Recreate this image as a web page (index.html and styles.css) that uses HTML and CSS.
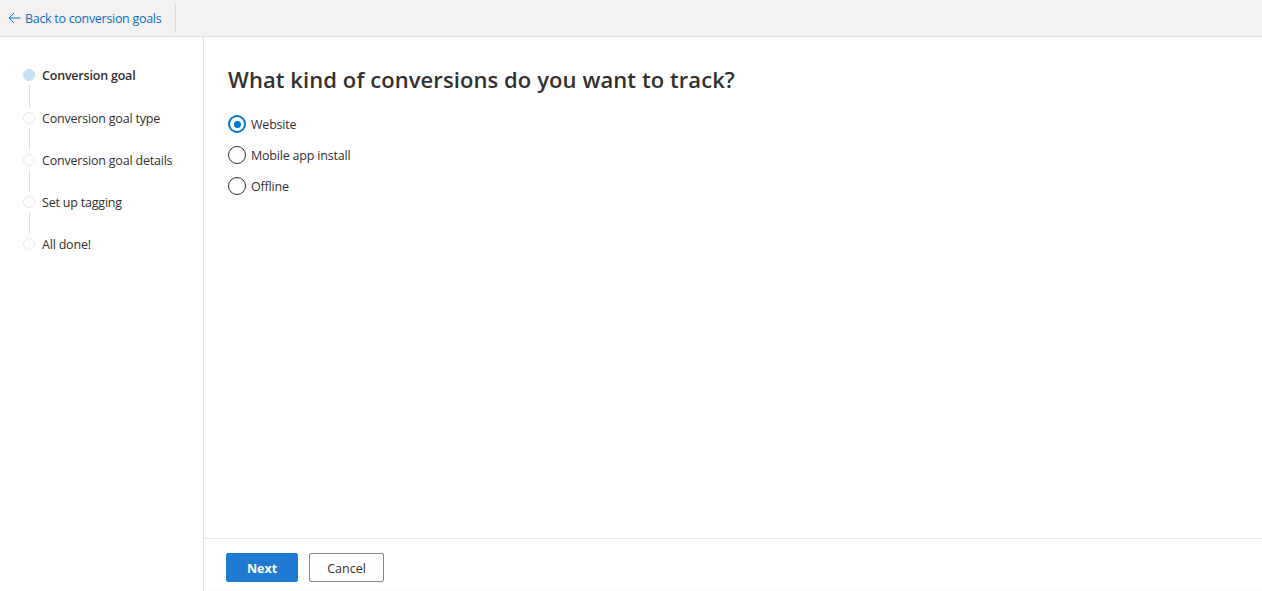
FILE: index.html
```html
<!DOCTYPE html>
<html lang="en">
<head>
<meta charset="utf-8">
<title>Conversion goal</title>
<link rel="stylesheet" href="styles.css">
</head>
<body>
<header class="topbar">
  <a class="back-link" href="#">
    <svg class="back-icon" width="13" height="12" viewBox="0 0 13 12" aria-hidden="true"><path d="M12.5 6H1.2M6 1L1 6l5 5" fill="none" stroke="#0078d4" stroke-width="1"/></svg>
    <span>Back to conversion goals</span>
  </a>
  <div class="topbar-sep"></div>
</header>
<div class="layout">
  <nav class="steps">
    <div class="step active"><span class="dot"></span><span class="step-label">Conversion goal</span></div>
    <div class="connector first"></div>
    <div class="step"><span class="dot"></span><span class="step-label">Conversion goal type</span></div>
    <div class="connector"></div>
    <div class="step"><span class="dot"></span><span class="step-label">Conversion goal details</span></div>
    <div class="connector"></div>
    <div class="step"><span class="dot"></span><span class="step-label">Set up tagging</span></div>
    <div class="connector"></div>
    <div class="step"><span class="dot"></span><span class="step-label">All done!</span></div>
  </nav>
  <main class="main">
    <div class="content">
      <h1 class="title">What kind of conversions do you want to track?</h1>
      <div class="radios">
        <label class="radio checked"><span class="radio-circle"></span><span>Website</span></label>
        <label class="radio"><span class="radio-circle"></span><span>Mobile app install</span></label>
        <label class="radio"><span class="radio-circle"></span><span>Offline</span></label>
      </div>
    </div>
    <footer class="footer">
      <button class="btn btn-primary">Next</button>
      <button class="btn btn-default">Cancel</button>
    </footer>
  </main>
</div>
</body>
</html>
```
FILE: styles.css
```css
* { box-sizing: border-box; }
html, body { margin: 0; padding: 0; height: 100%; }
body {
  font-family: "Open Sans", "Noto Sans", "Liberation Sans", sans-serif;
  color: #323130;
  background: #fff;
  font-size: 13px;
  display: flex;
  flex-direction: column;
  height: 591px;
  overflow: hidden;
}
.topbar {
  height: 37px;
  background: #f3f2f1;
  border-bottom: 1px solid #e1dfdd;
  display: flex;
  align-items: center;
  flex: none;
}
.back-link {
  display: flex;
  align-items: center;
  gap: 4px;
  padding-left: 8px;
  color: #106ebe;
  text-decoration: none;
  font-size: 12.5px;
  letter-spacing: -0.3px;
  width: 175px;
  height: 100%;
}
.back-icon { flex: none; }
.topbar-sep {
  width: 1px;
  height: 29px;
  background: #dcdad8;
}
.layout {
  flex: 1;
  display: flex;
  min-height: 0;
}
.steps {
  width: 204px;
  flex: none;
  border-right: 1px solid #e1dfdd;
  padding: 32px 0 0 23px;
  display: flex;
  flex-direction: column;
}
.step {
  display: flex;
  align-items: center;
  height: 12px;
}
.dot {
  width: 12px;
  height: 12px;
  border-radius: 50%;
  border: 1px solid #edebe9;
  background: #fff;
  flex: none;
}
.step.active .dot {
  background: #c7e0f4;
  border-color: #c7e0f4;
}
.step-label {
  margin-left: 7px;
  font-size: 12.5px;
  letter-spacing: -0.2px;
  white-space: nowrap;
}
.step.active .step-label { font-weight: 600; }
.connector {
  width: 1px;
  height: 30px;
  background: #e1dfdd;
  margin-left: 5.5px;
  border: 0;
  padding: 4px 0;
  background-clip: content-box;
}
.connector.first { height: 31px; }
.main {
  flex: 1;
  display: flex;
  flex-direction: column;
  min-width: 0;
}
.content {
  flex: 1;
  padding: 27px 24px 0 24px;
}
.title {
  margin: 0 0 21px 0;
  font-size: 22px;
  font-weight: 600;
  letter-spacing: 0.08px;
  line-height: 30px;
  color: #323130;
}
.radios {
  display: flex;
  flex-direction: column;
  gap: 13px;
}
.radio {
  display: flex;
  align-items: center;
  gap: 5px;
  font-size: 12.5px;
  letter-spacing: -0.2px;
  height: 18px;
}
.radio-circle {
  width: 18px;
  height: 18px;
  border-radius: 50%;
  border: 1px solid #323130;
  background: #fff;
  flex: none;
  display: flex;
  align-items: center;
  justify-content: center;
}
.radio.checked .radio-circle {
  border: 2px solid #0078d4;
}
.radio.checked .radio-circle::after {
  content: "";
  width: 7px;
  height: 7px;
  border-radius: 50%;
  background: #0078d4;
}
.footer {
  flex: none;
  height: 53px;
  border-top: 1px solid #edebe9;
  padding: 14px 22px 0 22px;
  display: flex;
  align-items: flex-start;
  gap: 11px;
  box-shadow: inset 0 -3px 3px -3px rgba(0,0,0,0.04);
}
.btn {
  height: 29px;
  font-family: inherit;
  font-size: 12.5px;
  border-radius: 2px;
  padding: 1px 0 0 0;
  cursor: pointer;
}
.btn-primary {
  width: 72px;
  background: #1f7ad3;
  color: #fff;
  border: 1px solid #1f7ad3;
  font-weight: 700;
}
.btn-default {
  width: 75px;
  background: #fff;
  color: #323130;
  border: 1px solid #8a8886;
  font-weight: 500;
}
```
